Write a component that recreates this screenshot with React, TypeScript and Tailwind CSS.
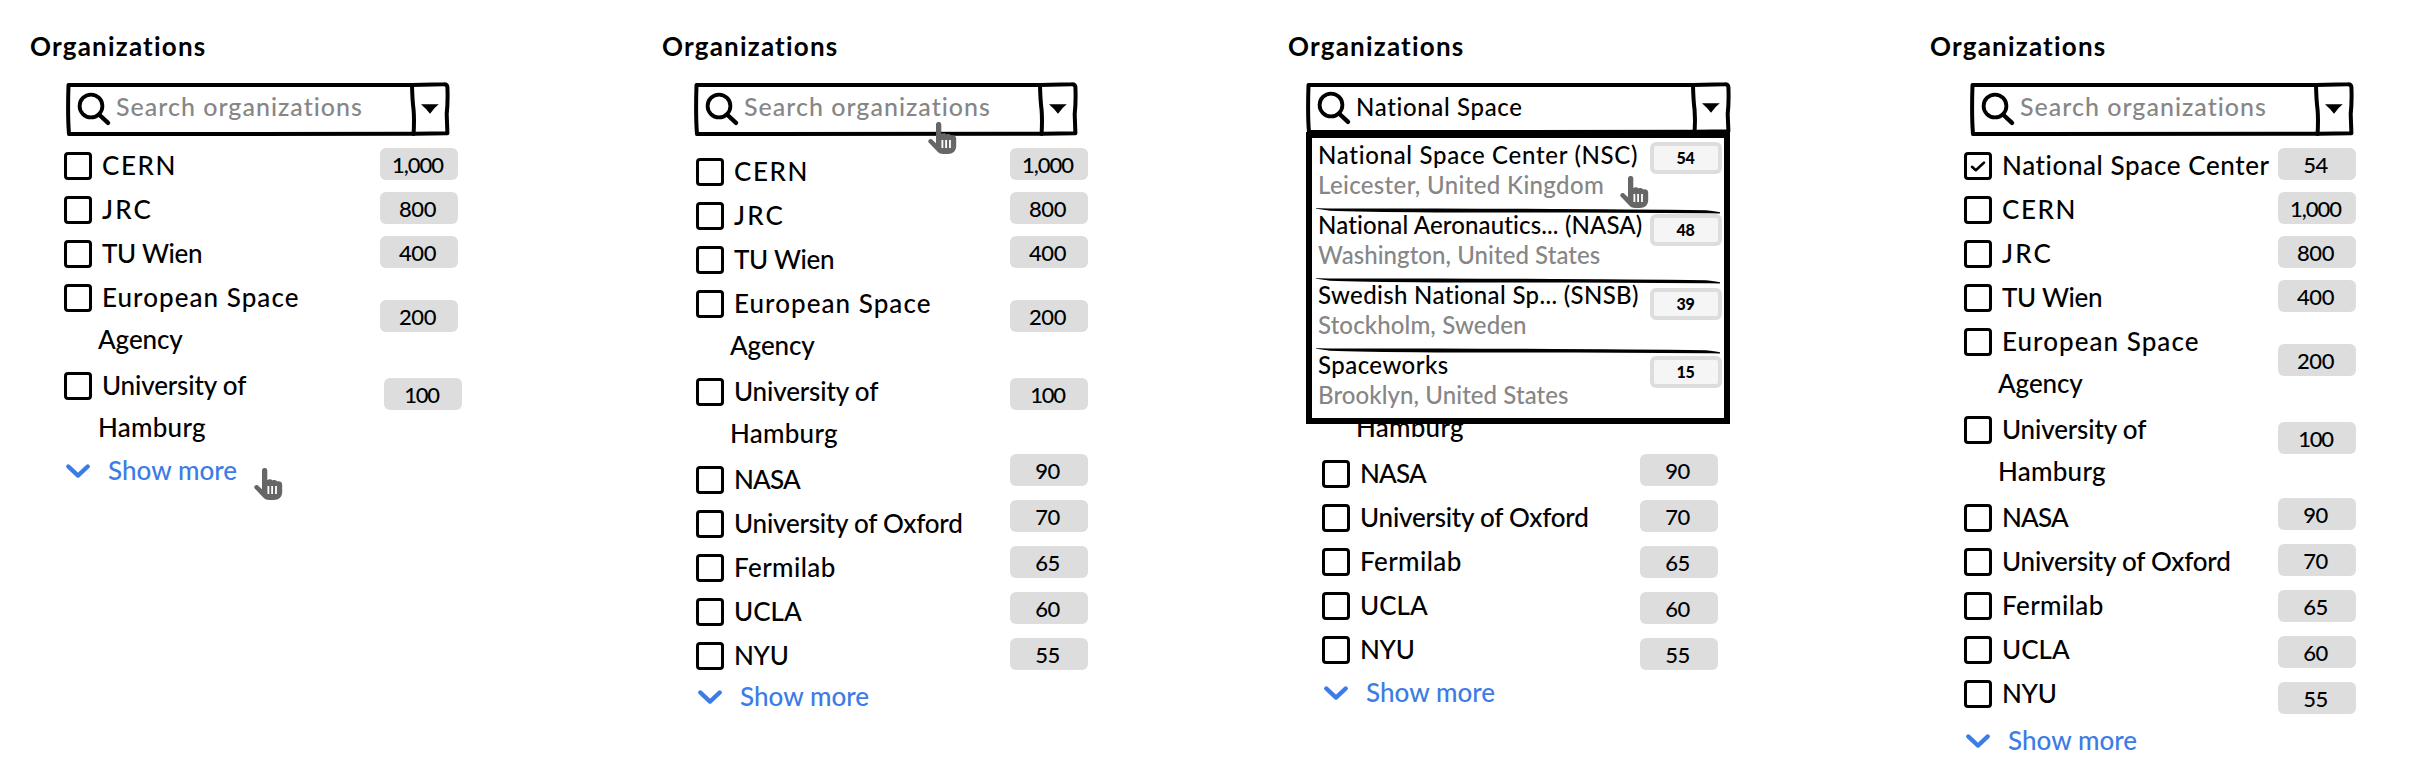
import React from "react";

type Line = { text: string; track: string };
type Org = { lines: Line[]; checked?: boolean };
type Badge = { count: string; offset: string; track: string };

const org = (text: string, track: string): Org => ({ lines: [{ text, track }] });

const cern = org("CERN", "tracking-[1.6px]");
const jrc = org("JRC", "tracking-[2.2px]");
const tuWien = org("TU Wien", "tracking-[-0.3px]");
const esa: Org = {
  lines: [
    { text: "European Space", track: "tracking-[1.05px]" },
    { text: "Agency", track: "tracking-[-0.1px]" },
  ],
};
const hamburg: Org = {
  lines: [
    { text: "University of", track: "tracking-[-0.15px]" },
    { text: "Hamburg", track: "tracking-[0.25px]" },
  ],
};
const nasa = org("NASA", "tracking-[-0.8px]");
const oxford = org("University of Oxford", "tracking-[-0.22px]");
const fermilab = org("Fermilab", "tracking-[0.4px]");
const ucla = org("UCLA", "tracking-[0px]");
const nyu = org("NYU", "tracking-[-0.3px]");
const nsc: Org = { ...org("National Space Center", "tracking-[0.6px]"), checked: true };

const shortList = [cern, jrc, tuWien, esa, hamburg];
const longList = [...shortList, nasa, oxford, fermilab, ucla, nyu];

const badge = (count: string, offset: string, track = "tracking-[-0.4px]"): Badge => ({ count, offset, track });

const topBadges = [
  badge("1,000", "", "tracking-[-1px]"),
  badge("800", "mt-3"),
  badge("400", "mt-3"),
  badge("200", "mt-8"),
];
const tailBadges = [
  badge("90", "mt-11"),
  badge("70", "mt-3.5"),
  badge("65", "mt-3.5"),
  badge("60", "mt-3.5"),
  badge("55", "mt-3.5"),
];
const shortBadges = [...topBadges, badge("100", "mt-[46px] ml-1", "tracking-[-1.2px]")];
const longBadges = [...topBadges, badge("100", "mt-[46px]", "tracking-[-1.2px]"), ...tailBadges];
const selectedBadges = [
  badge("54", ""),
  badge("1,000", "mt-3", "tracking-[-1px]"),
  ...longBadges.slice(1),
];

const results = [
  { name: "National Space Center (NSC)", nameTrack: "tracking-[0.7px]", place: "Leicester, United Kingdom", placeTrack: "tracking-[0.35px]", count: "54", badge: "mt-1" },
  { name: "National Aeronautics... (NASA)", nameTrack: "tracking-[0.14px]", place: "Washington, United States", placeTrack: "tracking-[0.06px]", count: "48", badge: "mt-1.5" },
  { name: "Swedish National Sp... (SNSB)", nameTrack: "tracking-[0.34px]", place: "Stockholm, Sweden", placeTrack: "tracking-[0.12px]", count: "39", badge: "mt-2.5" },
  { name: "Spaceworks", nameTrack: "tracking-[0.45px]", place: "Brooklyn, United States", placeTrack: "tracking-[0.08px]", count: "15", badge: "mt-2" },
];

function SearchBar({ value, wide = false }: { value?: string; wide?: boolean }) {
  const w = wide ? 424 : 383;
  const h = wide ? 50 : 52;
  const d = w - 37;
  const lift = wide ? -1 : 0;
  return (
    <div className={`relative h-[54px] ${wide ? "w-[424px]" : "w-[383px]"}`}>
      <svg className="absolute inset-0 overflow-visible" width={w} height="54" fill="none" stroke="#000" strokeWidth="4" strokeLinecap="round" strokeLinejoin="round">
        <path d={`M2.5 3 L${d} 3 L${w - 5.5} 2.2 Q${w - 1.8} 2 ${w - 1.6} 5 Q${w - 1} 20 ${w - 2.3} 32 L${w - 1.6} ${h - 0.8} L${d + 3} ${h - 0.2} L3 ${h} Q1.5 34 2.5 3`} />
        <path d={`M${d} 3 Q${d + 0.3} 18 ${d + 1.6} 28 Q${d + 2.4} 38 ${d + 1.6} ${h}`} />
        <circle cx="25" cy={24 + lift} r="11.4" strokeWidth="3.8" />
        <path d={`M33 ${32.5 + lift} L42 ${40.8 + lift}`} strokeWidth="4.4" />
        <path d={`M${w - 28} ${22.2 + lift} h17.8 q-4.7 3.5 -8.8 9.6 q-3.6 -5 -9 -9.6z`} fill="#000" stroke="none" />
      </svg>
      {value ? (
        <span className="block pl-[50px] text-[24px] leading-[49px] tracking-[0.65px]">{value}</span>
      ) : (
        <span className="block pl-[50px] text-[25px] leading-[49px] tracking-[1px] text-[#868686]">Search organizations</span>
      )}
    </div>
  );
}

function OrgRow({ item, hiddenLines }: { item: Org; hiddenLines: number }) {
  return (
    <li className={`flex items-start ${item.lines.length > 1 ? "h-[88px]" : "h-11"}`}>
      <span className="size-7 shrink-0 rounded-[4px] border-3 border-black">
        {item.checked && (
          <svg className="size-[22px]" viewBox="0 0 22 22" fill="none" stroke="#000" strokeWidth="2.6" strokeLinecap="round" strokeLinejoin="round">
            <path d="M5 11.8 L8.8 15.2 L17 7.6" />
          </svg>
        )}
      </span>
      <span className="-mt-2 ml-1.5 block indent-1 leading-[42px] whitespace-nowrap">
        {item.lines.map((line, i) => (
          <React.Fragment key={line.text}>
            {i > 0 && <br />}
            <span className={`${line.track} ${i < hiddenLines ? "invisible" : ""}`}>{line.text}</span>
          </React.Fragment>
        ))}
      </span>
    </li>
  );
}

function ShowMore({ className = "" }: { className?: string }) {
  return (
    <div className={`flex h-7 items-start text-[#3b7ce6] ${className}`}>
      <svg className="size-7 shrink-0" viewBox="0 0 28 28" fill="none" stroke="currentColor" strokeWidth="4.2" strokeLinecap="round" strokeLinejoin="round">
        <path d="M4.2 6.4 L14 15.6 L23.8 6.4" />
      </svg>
      <span className="-mt-1 ml-4 leading-7 tracking-[0.05px] whitespace-nowrap">Show more</span>
    </div>
  );
}

function Hand({ className }: { className: string }) {
  return (
    <svg className={`absolute z-20 h-8 w-[29px] ${className}`} viewBox="0 0 29 32">
      <path fill="#666" d="M8 2.6a2.65 2.65 0 0 1 5.3 0V12c1.6-1.3 4.3-1 5 .5 1.7-.9 4-.5 4.8 1 2.7-.6 5.1.6 5.1 3.2V24c0 5-3.4 8-8.4 8H15.4c-3 0-5.2-1.1-7-3.5L.7 20.6C-.8 18.3 1.8 15.9 4 17.4l4 3.8z" />
      <path stroke="#fff" strokeWidth="1.8" d="M14.4 18v8M18.1 18v8M22 18v8" />
    </svg>
  );
}

function Results() {
  return (
    <ul className="absolute top-[132px] left-[18px] z-10 h-[292px] w-[424px] border-6 border-black bg-white text-[24px]">
      {results.map((r, i) => (
        <li key={r.name} className="relative flex h-[70px] items-start justify-between pr-0.5 pl-1.5 leading-[30px] whitespace-nowrap">
          {i > 0 && (
            <svg className="absolute top-0 left-1 h-1.5 w-[404px]" viewBox="0 0 404 6">
              <path d="M0 0 Q8 .6 30 .4 L120 .4 Q300 1 390 2.2 Q399 3 404 4.2 V5.6 Q396 5 390 5.2 L260 4.4 Q180 4.4 120 4.4 Q40 4 14 2.8 Q4 1.6 0 .6z" />
            </svg>
          )}
          <div className="pt-0.5">
            <p className={r.nameTrack}>{r.name}</p>
            <p className={`text-[#868686] ${r.placeTrack}`}>{r.place}</p>
          </div>
          <span className={`h-8 w-[72px] shrink-0 rounded-md border-4 border-[#ddd] bg-[#f5f5f5] pr-px text-center text-[16px] leading-[23px] font-black tracking-[-0.2px] ${r.badge}`}>
            {r.count}
          </span>
        </li>
      ))}
    </ul>
  );
}

type PanelProps = {
  width: string;
  barInset: string;
  listInset: string;
  listWidth: string;
  items: Org[];
  badges: Badge[];
  moreClass?: string;
  value?: string;
  coveredLines?: number;
  children?: React.ReactNode;
};

function Panel({ width, barInset, listInset, listWidth, items, badges, moreClass, value, coveredLines = 0, children }: PanelProps) {
  let seen = 0;
  const rows = items.map((item) => {
    const hiddenLines = coveredLines - seen;
    seen += item.lines.length;
    return { item, hiddenLines };
  });
  const coveredRows = rows.filter((r) => r.hiddenLines > 0).length;
  return (
    <section className={`relative shrink-0 pt-[26px] ${width}`}>
      <h2 className="h-14 leading-10 font-bold tracking-[1.2px]">Organizations</h2>
      <div className={barInset}>
        <SearchBar value={value} wide={!!value} />
      </div>
      <div className={`flex items-start ${listInset}`}>
        <div className={`shrink-0 ${listWidth}`}>
          <ul>
            {rows.map(({ item, hiddenLines }) => (
              <OrgRow key={item.lines[0].text} item={item} hiddenLines={hiddenLines} />
            ))}
          </ul>
          <ShowMore className={moreClass} />
        </div>
        <ul className="pt-3">
          {badges.map((b, i) => (
            <li key={b.count} className={`h-8 w-[78px] rounded-md bg-[#ddd] pr-[3px] text-center text-[22px] leading-[33px] ${b.offset} ${b.track} ${i < coveredRows ? "invisible" : ""}`}>
              {b.count}
            </li>
          ))}
        </ul>
      </div>
      {children}
    </section>
  );
}

export default function App() {
  return (
    <main className="flex h-[782px] w-[2418px] overflow-hidden bg-white pl-[30px] font-['Lato',sans-serif] text-[26px] font-medium text-black [font-variant-ligatures:none]">
      <Panel width="w-[632px]" barInset="pl-9" listInset="pl-[34px]" listWidth="w-[316px] pt-4" items={shortList} badges={shortBadges}>
        <Hand className="top-[468px] left-[224px]" />
      </Panel>
      <Panel width="w-[626px]" barInset="pl-8" listInset="pl-[34px]" listWidth="w-[314px] pt-[22px]" items={longList} badges={longBadges}>
        <Hand className="top-[122px] left-[266px]" />
      </Panel>
      <Panel width="w-[642px]" barInset="pl-[18px]" listInset="pl-[34px]" listWidth="w-[318px] pt-4" items={longList} badges={longBadges} moreClass="mt-0.5" value="National Space" coveredLines={6}>
        <Results />
        <Hand className="top-[176px] left-[332px]" />
      </Panel>
      <Panel width="w-[488px]" barInset="pl-10" listInset="pl-[34px]" listWidth="w-[314px] pt-4" items={[nsc, ...longList]} badges={selectedBadges} moreClass="mt-1.5" />
    </main>
  );
}
